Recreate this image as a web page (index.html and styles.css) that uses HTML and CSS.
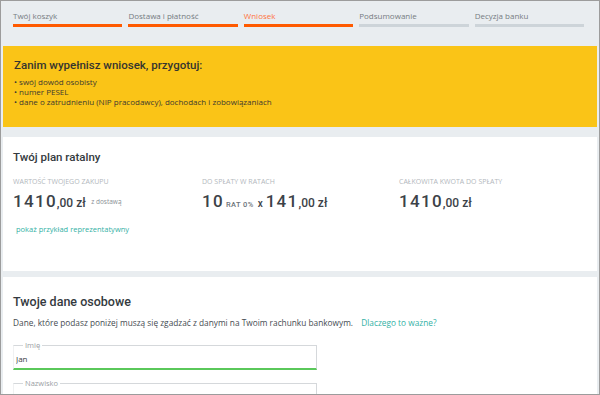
FILE: index.html
```html
<!DOCTYPE html>
<html lang="pl">

<head>
    <meta charset="UTF-8">
    <meta name="viewport" content="width=device-width, initial-scale=1.0">
    <title>Wniosek</title>
    <link rel="stylesheet" href="styles.css">
</head>

<body>
    <div class="page">
        <ul class="steps">
            <li class="step done">Twój koszyk</li>
            <li class="step done">Dostawa i płatność</li>
            <li class="step active">Wniosek</li>
            <li class="step">Podsumowanie</li>
            <li class="step">Decyzja banku</li>
        </ul>

        <div class="notice">
            <h2>Zanim wypełnisz wniosek, przygotuj:</h2>
            <ul>
                <li>swój dowód osobisty</li>
                <li>numer PESEL</li>
                <li>dane o zatrudnieniu (NIP pracodawcy), dochodach i zobowiązaniach</li>
            </ul>
        </div>

        <section class="card plan">
            <h2>Twój plan ratalny</h2>
            <div class="plan_cols">
                <div class="plan_col">
                    <div class="label">Wartość twojego zakupu</div>
                    <div class="amount">1410<small>,00 zł</small> <span class="note">z dostawą</span></div>
                </div>
                <div class="plan_col">
                    <div class="label">Do spłaty w ratach</div>
                    <div class="amount">10<span class="rat">RAT 0%</span><span class="times">x</span>141<small>,00 zł</small></div>
                </div>
                <div class="plan_col">
                    <div class="label">Całkowita kwota do spłaty</div>
                    <div class="amount">1410<small>,00 zł</small></div>
                </div>
            </div>
            <a href="#" class="link example">pokaż przykład reprezentatywny</a>
        </section>

        <section class="card personal">
            <h2>Twoje dane osobowe</h2>
            <p class="desc">Dane, które podasz poniżej muszą się zgadzać z danymi na Twoim rachunku bankowym. <a href="#" class="link">Dlaczego to ważne?</a></p>
            <fieldset class="field valid">
                <legend>Imię</legend>
                <input type="text" value="Jan">
            </fieldset>
            <fieldset class="field">
                <legend>Nazwisko</legend>
                <input type="text" value="Kowalski">
            </fieldset>
        </section>
    </div>
</body>

</html>
```

FILE: styles.css
```css
* {
    margin: 0;
    padding: 0;
    box-sizing: border-box;
}

html,
body {
    height: 100%;
    overflow: hidden;
}

body {
    border: 1px solid #9c9c9c;
    background-color: #e9edf0;
    font-family: "Open Sans", "DejaVu Sans", sans-serif;
    color: #4a5056;
}

.page {
    height: 100%;
    overflow: hidden;
    padding: 0 2px;
}

/* steps */

.steps {
    list-style: none;
    display: flex;
    gap: 6px;
    padding: 10px 13px 0 10px;
    margin-bottom: 19px;
}

.step {
    flex: 1;
    font-size: 8px;
    line-height: 10px;
    color: #767c82;
}

.step::after {
    content: "";
    display: block;
    height: 3px;
    margin-top: 3px;
    background-color: #cdd4d9;
}

.step.done::after,
.step.active::after {
    background-color: #ff5a00;
}

.step.active {
    color: #ff7440;
}

/* notice */

.notice {
    background-color: #fac417;
    padding: 12px 11px 20px;
    color: #3d3a30;
}

.notice h2 {
    font-family: Roboto, sans-serif;
    font-weight: 500;
    font-size: 11.5px;
    line-height: 14px;
    color: #35352f;
    margin-bottom: 5px;
}

.notice ul {
    list-style: none;
    font-size: 8px;
    line-height: 10px;
}

.notice li::before {
    content: "• ";
}

/* cards */

.card {
    background-color: #fff;
    padding: 0 10px;
}

.card h2 {
    font-family: Roboto, sans-serif;
    font-weight: 500;
    color: #343a40;
}

.plan {
    height: 134px;
    padding-top: 13px;
    margin: 10px 0 6px;
}

.plan h2 {
    font-size: 11.5px;
    line-height: 14px;
    margin-bottom: 13px;
}

.plan_cols {
    display: grid;
    grid-template-columns: 189px 197px 1fr;
}

.label {
    font-size: 7px;
    line-height: 9px;
    text-transform: uppercase;
    color: #b3b8bd;
    margin-bottom: 5px;
}

.amount {
    font-family: Roboto, sans-serif;
    font-weight: 500;
    font-size: 17px;
    line-height: 20px;
    letter-spacing: 1.3px;
    color: #3c4248;
}

.amount small {
    font-size: 12px;
    letter-spacing: 0;
}

.amount .note {
    font-family: "Open Sans", sans-serif;
    font-weight: 400;
    font-size: 6.5px;
    letter-spacing: 0;
    color: #8a9096;
    vertical-align: 3px;
}

.amount .rat {
    font-size: 7.5px;
    letter-spacing: 0.4px;
    color: #6d737a;
    margin: 0 4px 0 2px;
}

.amount .times {
    font-size: 10px;
    letter-spacing: 0;
    margin-right: 3px;
}

.link {
    color: #33b1a5;
    text-decoration: none;
}

.example {
    display: inline-block;
    margin: 7px 0 0 3px;
    font-size: 7.5px;
    line-height: 10px;
}

.personal {
    padding-top: 17px;
}

.personal h2 {
    font-size: 12.5px;
    line-height: 15px;
    margin-bottom: 8px;
}

.desc {
    font-size: 8.3px;
    line-height: 11px;
    color: #454b51;
    margin-bottom: 13px;
}

.desc .link {
    margin-left: 6px;
}

.field {
    width: 304px;
    border: 1px solid #d5d8db;
    border-left-color: #f0f1f2;
    padding: 0 2px 4px;
    margin-bottom: 9px;
}

.field.valid {
    border-bottom: 2px solid #5ac85a;
}

.field legend {
    margin-left: 7px;
    padding: 0 2px;
    font-size: 7.5px;
    line-height: 9px;
    color: #9ba0a5;
}

.field input {
    display: block;
    width: 100%;
    height: 12px;
    margin-top: 2px;
    border: none;
    outline: none;
    font-family: "Open Sans", sans-serif;
    font-size: 8px;
    color: #3a4046;
    background: none;
}
```
